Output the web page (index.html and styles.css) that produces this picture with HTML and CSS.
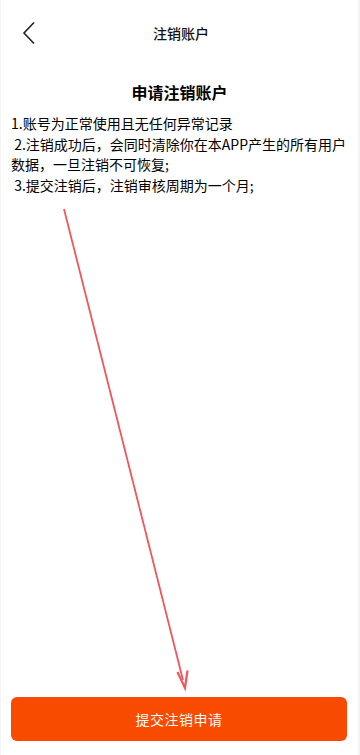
FILE: index.html
```html
<!DOCTYPE html>
<html lang="zh">
<head>
<meta charset="utf-8">
<link rel="stylesheet" href="styles.css">
</head>
<body>
<div class="page">
  <header class="topbar">
    <button class="back" aria-label="back">
      <svg width="14" height="24" viewBox="0 0 14 24"><path d="M12 1.5 L2 12 L12 22.5" fill="none" stroke="#222" stroke-width="1.6"/></svg>
    </button>
    <div class="title">注销账户</div>
  </header>
  <main class="content">
    <h1 class="heading">申请注销账户</h1>
    <div class="rules">
      <p>1.账号为正常使用且无任何异常记录</p>
      <p>&nbsp;2.注销成功后，会同时清除你在本APP产生的所有用户数据，一旦注销不可恢复;</p>
      <p>&nbsp;3.提交注销后，注销审核周期为一个月;</p>
    </div>
  </main>
  <footer class="footer">
    <button class="submit">提交注销申请</button>
  </footer>
  <svg class="arrow" width="360" height="755" viewBox="0 0 360 755">
    <line x1="64" y1="209" x2="183" y2="680" stroke="#f0565c" stroke-width="1.8"/>
    <path d="M177.5 672 L185 688 L187.5 670.5" fill="none" stroke="#f0565c" stroke-width="2.2" stroke-linejoin="miter"/>
  </svg>
</div>
</body>
</html>
```
FILE: styles.css
```css
* { box-sizing: border-box; }
html, body { margin: 0; padding: 0; }
body {
  background: #f4f4f4;
  font-family: "Noto Sans CJK SC", "Noto Sans", sans-serif;
  color: #000;
}
.page {
  position: relative;
  width: 357px;
  height: 755px;
  margin-left: 1px;
  background: #fff;
  display: flex;
  flex-direction: column;
}
.topbar {
  height: 66px;
  display: flex;
  align-items: center;
  justify-content: center;
  position: relative;
}
.back {
  position: absolute;
  left: 20px;
  top: 21px;
  border: 0;
  background: none;
  padding: 0;
  width: 16px;
  height: 24px;
}
.title {
  font-size: 14px;
  font-weight: 500;
  color: #111;
  margin-top: -1px;
  margin-left: 3px;
}
.content {
  flex: 1;
  padding: 0 10px;
}
.heading {
  margin: 14px 0 9px;
  font-size: 16px;
  font-weight: 700;
  text-align: center;
  line-height: 24px;
  color: #000;
}
.rules p {
  margin: 0;
  font-size: 14px;
  font-weight: 400;
  line-height: 20.7px;
  color: #000;
}
.footer {
  padding: 0 10px 14px;
}
.submit {
  width: 336px;
  height: 44px;
  border: 0;
  border-radius: 6px;
  background: #f94b00;
  color: #fff;
  font-family: inherit;
  font-size: 14px;
  font-weight: 400;
  letter-spacing: 0.5px;
}
.arrow {
  position: absolute;
  left: -1px;
  top: 0;
  pointer-events: none;
}
```
